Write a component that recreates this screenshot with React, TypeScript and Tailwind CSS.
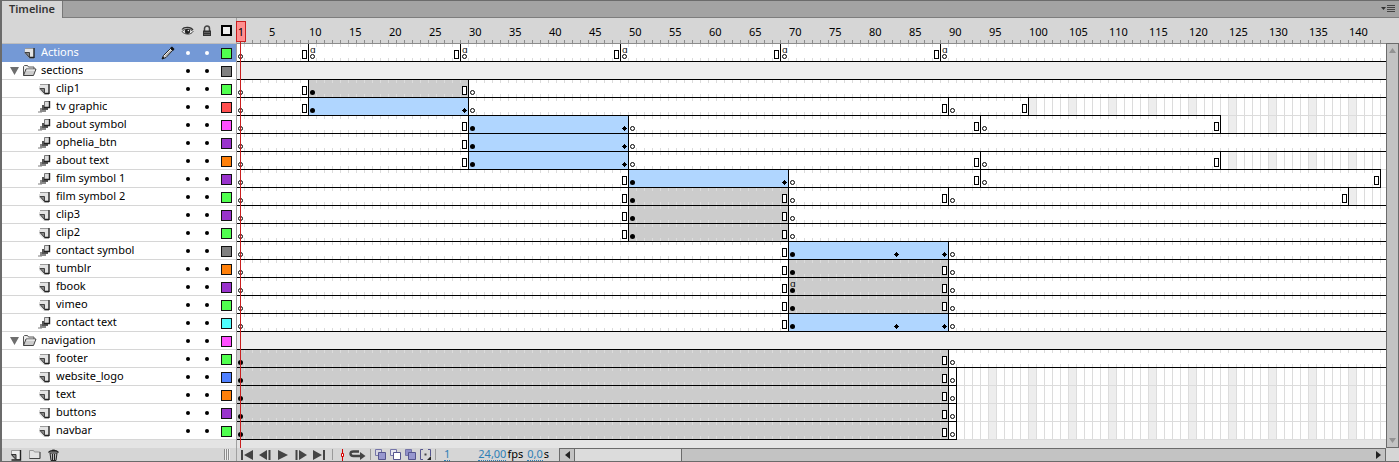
import { useState } from "react";
import clsx from "clsx";

const FRAME = 8;

type Kind = "blank" | "filled" | "tween" | "empty";

interface Span {
  kind: Kind;
  // last frame of the span, left out when it runs to the edge of the view
  to?: number;
  start?: "key" | "blankKey";
  end?: "rect" | "diamond";
  action?: boolean;
  // the span carries on into the next one without a divider
  joined?: boolean;
  darkLine?: boolean;
}

interface Layer {
  name: string;
  icon: "layer" | "tween" | "folder";
  color: string;
  spans: Span[];
}

const blank = (to?: number, more: Partial<Span> = {}): Span => ({
  kind: "blank",
  to,
  start: "blankKey",
  end: to ? "rect" : undefined,
  ...more,
});
const filled = (to: number, more: Partial<Span> = {}): Span => ({
  kind: "filled",
  to,
  start: "key",
  end: "rect",
  ...more,
});
const tween = (to: number, more: Partial<Span> = {}): Span => ({
  kind: "tween",
  to,
  start: "key",
  end: "diamond",
  ...more,
});
const empty = (to?: number, darkLine = false): Span => ({ kind: "empty", to, darkLine });

const green = "bg-[#50ff4f]";
const gray = "bg-[#808080]";
const red = "bg-[#ff4f4f]";
const pink = "bg-[#ff4fff]";
const purple = "bg-[#9933cc]";
const orange = "bg-[#ff800a]";
const cyan = "bg-[#4fffff]";
const blue = "bg-[#4f80ff]";

const layers: Layer[] = [
  {
    name: "Actions",
    icon: "layer",
    color: green,
    spans: [
      blank(9),
      blank(28, { action: true }),
      blank(48, { action: true }),
      blank(68, { action: true }),
      blank(88, { action: true }),
      blank(undefined, { action: true }),
    ],
  },
  { name: "sections", icon: "folder", color: gray, spans: [] },
  { name: "clip1", icon: "layer", color: green, spans: [blank(9), filled(29), blank()] },
  {
    name: "tv graphic",
    icon: "tween",
    color: red,
    spans: [blank(9), tween(29), blank(89), blank(99), empty(123, true), empty()],
  },
  {
    name: "about symbol",
    icon: "tween",
    color: pink,
    spans: [blank(29), tween(49), blank(93), blank(123), empty(undefined, true)],
  },
  { name: "ophelia_btn", icon: "tween", color: purple, spans: [blank(29), tween(49), blank()] },
  {
    name: "about text",
    icon: "tween",
    color: orange,
    spans: [blank(29), tween(49), blank(93), blank(123), empty(143, true), empty()],
  },
  {
    name: "film symbol 1",
    icon: "tween",
    color: purple,
    spans: [blank(49), tween(69), blank(93), blank(143), empty()],
  },
  {
    name: "film symbol 2",
    icon: "layer",
    color: green,
    spans: [blank(49), filled(69), blank(89), blank(139), empty(undefined, true)],
  },
  { name: "clip3", icon: "layer", color: purple, spans: [blank(49), filled(69), blank()] },
  { name: "clip2", icon: "layer", color: green, spans: [blank(49), filled(69), blank()] },
  {
    name: "contact symbol",
    icon: "tween",
    color: gray,
    spans: [blank(69), tween(83, { joined: true }), tween(89, { start: undefined }), blank()],
  },
  { name: "tumblr", icon: "layer", color: orange, spans: [blank(69), filled(89), blank()] },
  {
    name: "fbook",
    icon: "layer",
    color: purple,
    spans: [blank(69), filled(89, { action: true }), blank()],
  },
  { name: "vimeo", icon: "layer", color: green, spans: [blank(69), filled(89), blank()] },
  {
    name: "contact text",
    icon: "tween",
    color: cyan,
    spans: [blank(69), tween(83, { joined: true }), tween(89, { start: undefined }), blank()],
  },
  { name: "navigation", icon: "folder", color: pink, spans: [] },
  { name: "footer", icon: "layer", color: green, spans: [filled(89), blank()] },
  ...[
    ["website_logo", blue],
    ["text", orange],
    ["buttons", purple],
    ["navbar", green],
  ].map(([name, color]): Layer => ({
    name,
    icon: "layer",
    color,
    spans: [filled(89), blank(90, { end: undefined }), empty()],
  })),
];

function LayerIcon() {
  return (
    <svg width="12" height="12" viewBox="0 0 12 12" aria-hidden="true">
      <path d="M0 3h10v9H5L0 7z" fill="#999" opacity=".35" />
      <path d="M1 1h9v9.500H6L1 5.500z" fill="#e4e4e4" />
      <path d="M1 1.500h8.500" stroke="#999" />
      <path d="M10 1v10M5.500 10.500H10" stroke="#222" strokeWidth="1.400" />
      <path d="M1 5.500h4.500v5z" fill="#888" stroke="#333" strokeWidth=".9" />
    </svg>
  );
}

function TweenIcon() {
  return (
    <svg width="14" height="14" viewBox="0 0 14 14" aria-hidden="true">
      <path d="M0 11h4v2H0z" fill="#bdbdbd" />
      <path d="M2 8h6v4H2z" fill="#8a8a8a" />
      <path d="M4 5h6v5H4z" fill="#555" />
      <path d="M6.500 1.500h5v6h-5z" fill="#dcdcdc" stroke="#777" />
      <path d="M11.500 1v6.500H6" fill="none" stroke="#222" strokeWidth="1.400" />
    </svg>
  );
}

function FolderIcon() {
  return (
    <svg width="15" height="13" viewBox="0 0 15 13" aria-hidden="true">
      <path d="M1.500 11.500v-9l1-1h3l1 1.500h5.500v2" fill="#eee" stroke="#555" />
      <path d="M1.500 11.500 4 5h10l-2.500 6.500z" fill="#ccc" stroke="#444" />
      <path d="M4.500 6h8.500" stroke="#fff" />
    </svg>
  );
}

function LayerRow({
  layer,
  selected,
  onSelect,
}: {
  layer: Layer;
  selected: boolean;
  onSelect: () => void;
}) {
  const folder = layer.icon === "folder";
  const nested = !folder && layer.name !== "Actions";
  const dot = clsx("size-1 rounded-full", selected ? "bg-white" : "bg-black");

  return (
    <li
      className={clsx(
        "flex h-[18px] items-center border-b pr-1",
        selected ? "border-[#7499d6] bg-[#7499d6] text-white" : "border-[#d6d6d6] bg-white",
      )}
    >
      <button
        onClick={onSelect}
        className={clsx(
          "flex h-full min-w-0 flex-1 items-center text-left",
          folder ? "gap-[3px] pl-2" : nested ? "gap-1 pl-9" : "gap-1 pl-[21px]",
        )}
      >
        {folder && (
          <svg width="9" height="8" viewBox="0 0 9 8" aria-hidden="true">
            <path d="M0 0h9L4.500 8z" fill="#6e6e6e" />
          </svg>
        )}
        <span className={clsx("flex items-center", folder ? "w-4" : "h-4 w-3.5 justify-center")}>
          {layer.icon === "layer" && <LayerIcon />}
          {layer.icon === "tween" && <TweenIcon />}
          {folder && <FolderIcon />}
        </span>
        <span className="truncate pb-0.5 leading-4">{layer.name}</span>
      </button>
      {selected && (
        <svg className="mr-[3px]" width="14" height="14" viewBox="0 0 14 14" aria-hidden="true">
          <path d="M1 13 2.500 9.500 9.500 2.500l2 2L5 11.500z" fill="#eee" stroke="#222" />
          <path d="m4 10.500 6-6" stroke="#777" />
          <path d="M9 2 11 .5 13.500 3l-1.500 2zM1 13l1-2.500L3.500 12z" fill="#111" />
        </svg>
      )}
      <button aria-label={`Hide ${layer.name}`} className="flex w-[19px] justify-center py-1">
        <span className={dot} />
      </button>
      <button aria-label={`Lock ${layer.name}`} className="flex w-[19px] justify-center py-1">
        <span className={dot} />
      </button>
      <button
        aria-label={`Outline ${layer.name}`}
        className={clsx("mt-px ml-[5px] size-[11px] border border-[#111]", layer.color)}
      />
    </li>
  );
}

const kindClass: Record<Kind, string> = {
  blank:
    "bg-white [background-image:linear-gradient(90deg,transparent_7px,#dcdcdc_7px),linear-gradient(90deg,transparent_7px,#dcdcdc_7px)] [background-position:left_top,left_bottom] [background-size:8px_3px] bg-repeat-x",
  filled:
    "bg-[#cccccc] [background-image:linear-gradient(90deg,transparent_7px,#dcdcdc_7px),linear-gradient(90deg,transparent_7px,#dcdcdc_7px)] [background-position:left_top,left_bottom] [background-size:8px_3px] bg-repeat-x",
  tween: "bg-[#b0d6ff]",
  empty:
    "bg-white [background-image:linear-gradient(90deg,transparent_7px,#dcdcdc_7px),linear-gradient(90deg,transparent_32px,#ededed_32px)] [background-size:8px_100%,40px_100%]",
};

function FrameSpan({ span, from }: { span: Span; from: number }) {
  const style: React.CSSProperties = {};
  if (span.to) style.width = (span.to - from + 1) * FRAME;

  // only the grid shows past the last frame
  if (span.kind === "empty") {
    style.backgroundPosition = `0 0, ${-((from - 1) % 5) * FRAME}px 0`;
    return (
      <div
        style={style}
        className={clsx(
          "border-b",
          span.to ? "shrink-0" : "flex-1",
          span.darkLine ? "border-black" : "border-[#dcdcdc]",
          kindClass.empty,
        )}
      />
    );
  }

  return (
    <div
      style={style}
      className={clsx(
        "flex items-end justify-between border-b border-black px-px pb-0.5",
        span.to ? "shrink-0" : "flex-1",
        span.to && !span.joined && "border-r",
        span.joined && "pr-0.5",
        kindClass[span.kind],
      )}
    >
      <span className="flex w-[5px] flex-col">
        {span.action && (
          <span className="h-2 font-['DejaVu_Sans',sans-serif] text-[9px] leading-2">ɑ</span>
        )}
        {span.start === "key" && <span className="size-[5px] rounded-full bg-black" />}
        {span.start === "blankKey" && (
          <span className="size-[5px] rounded-full border border-black bg-white" />
        )}
      </span>
      {span.end === "rect" && <span className="h-[9px] w-[5px] border border-black bg-white" />}
      {span.end === "diamond" && (
        <svg width="5" height="5" viewBox="0 0 5 5" aria-hidden="true">
          <path d="M2 0h1v1h1v1h1v1H4v1H3v1H2V4H1V3H0V2h1V1h1z" />
        </svg>
      )}
    </div>
  );
}

function FrameRow({ layer }: { layer: Layer }) {
  if (layer.icon === "folder") {
    return <div className="h-[18px] border-b border-black bg-[#eeeeee]" />;
  }
  let next = 1;
  return (
    <div className="flex h-[18px] overflow-hidden">
      {layer.spans.map((span) => {
        const from = next;
        next = (span.to ?? from) + 1;
        return <FrameSpan key={from} span={span} from={from} />;
      })}
    </div>
  );
}

function Ruler() {
  const marks = Array.from({ length: 28 }, (_, i) => (i + 1) * 5);
  return (
    <div className="flex h-[26px] items-center overflow-hidden border-b border-[#8c8c8c] bg-[#d6d6d6] [background-image:linear-gradient(90deg,transparent_7px,#8c8c8c_7px)] [background-position:left_bottom] [background-size:8px_3px] bg-repeat-x pt-0.5">
      <span className="w-8 shrink-0" />
      {marks.map((n) => (
        <span key={n} className="w-10 shrink-0 leading-4">
          {n}
        </span>
      ))}
    </div>
  );
}

function Playback({ label, d }: { label: string; d: string }) {
  return (
    <button aria-label={label} className="flex w-[18px] justify-center">
      <svg width="12" height="10" viewBox="0 0 12 10" aria-hidden="true">
        <path d={d} fill="#444" />
      </svg>
    </button>
  );
}

function Onion({ label, back, front }: { label: string; back: string; front: string }) {
  return (
    <button aria-label={label} className="flex w-[15px] justify-center">
      <svg width="11" height="11" viewBox="0 0 11 11" aria-hidden="true">
        <path d="M.5.5h6v6h-6z" fill={back} stroke="#7474a8" />
        <path d="M3.500 3.500h7v7h-7z" fill={front} stroke="#55558e" />
      </svg>
    </button>
  );
}

const Divider = () => <span className="h-[11px] w-px bg-[#9a9a9a]" />;

const value = "h-[13px] border-b border-dotted border-[#2f7fb5] leading-3 text-[#2f7fb5]";

export default function App() {
  const [selected, setSelected] = useState("Actions");

  return (
    <div className="w-full border-t border-b border-l-2 border-[#6b6b6b] bg-[#d6d6d6] font-['Noto_Sans',sans-serif] text-[11px] text-black">
      <div className="flex h-[17px] items-stretch justify-between bg-[#a3a3a3]">
        <button className="border-r border-[#777] bg-[#d6d6d6] px-[7px] pb-0.5 leading-[15px] font-semibold text-[#333]">
          Timeline
        </button>
        <div className="flex flex-1 items-center justify-end border-b border-[#7d7d7d] pr-1">
          <button aria-label="Panel menu">
            <svg width="14" height="8" viewBox="0 0 14 8" aria-hidden="true">
              <path d="M0 2h5L2.500 5z" fill="#333" />
              <path d="M6 .5h8M6 2.500h8M6 4.500h8M6 6.500h8" stroke="#444" />
            </svg>
          </button>
        </div>
      </div>

      <div className="flex">
        <div className="w-[235px] shrink-0 border-r border-[#a0a0a0]">
          <div className="flex h-[26px] items-center justify-end border-b border-[#bdbdbd] pr-1">
            <button aria-label="Show or hide all layers" className="flex w-[19px] justify-center">
              <svg width="13" height="10" viewBox="0 0 13 10" aria-hidden="true">
                <path d="M1 3.500C3 .5 10 .5 12 4" fill="none" stroke="#333" strokeWidth="1.300" />
                <path d="M1 5.500C3 2.500 10 2.500 12 5.500 10 9 4 9 1 5.500z" fill="#eee" stroke="#444" />
                <circle cx="6.500" cy="5.300" r="2.600" fill="#222" />
                <circle cx="7.300" cy="4.500" r=".7" fill="#fff" />
              </svg>
            </button>
            <button aria-label="Lock or unlock all layers" className="flex w-[19px] justify-center">
              <svg width="10" height="12" viewBox="0 0 10 12" aria-hidden="true">
                <path d="M2.500 6V3.500a2.500 2.500 0 0 1 5 0V6" fill="none" stroke="#444" strokeWidth="1.500" />
                <path d="M1 5.500h8V11H1z" fill="#333" />
                <path d="M2 7.500h6M2 9.500h6" stroke="#777" strokeWidth=".7" />
              </svg>
            </button>
            <button
              aria-label="Show all layers as outlines"
              className="ml-[5px] size-[11px] border-2 border-black bg-[#eee]"
            />
          </div>
          <ul>
            {layers.map((layer) => (
              <LayerRow
                key={layer.name}
                layer={layer}
                selected={layer.name === selected}
                onSelect={() => setSelected(layer.name)}
              />
            ))}
          </ul>
          <div className="h-2 bg-[#e4e4e4]" />
        </div>

        <div className="relative min-w-0 flex-1">
          <Ruler />
          {layers.map((layer) => (
            <FrameRow key={layer.name} layer={layer} />
          ))}
          <div className="h-2 bg-[#e4e4e4]" />
          <div className="absolute top-[3px] bottom-0 -left-px flex w-[10px] flex-col">
            <span className="h-[21px] shrink-0 border border-[#c81e1e] bg-[#ff8f8f] text-center leading-5">
              1
            </span>
            <span className="ml-1 w-px flex-1 bg-[#c81e1e]" />
          </div>
        </div>

        <div className="flex w-[13px] shrink-0 flex-col pt-[25px]">
          <div className="flex flex-1 flex-col items-center justify-between border border-[#6b6b6b] bg-[#c3c3c3] py-1">
            <button aria-label="Scroll up">
              <svg width="7" height="5" viewBox="0 0 7 5" aria-hidden="true">
                <path d="M0 5h7L3.500 0z" fill="#929292" />
              </svg>
            </button>
            <button aria-label="Scroll down">
              <svg width="7" height="5" viewBox="0 0 7 5" aria-hidden="true">
                <path d="M0 0h7L3.500 5z" fill="#929292" />
              </svg>
            </button>
          </div>
        </div>
      </div>

      <div className="flex h-[13px] items-center">
        <div className="flex h-full w-[235px] shrink-0 items-center border-r border-[#a0a0a0] pr-1.5 pl-2">
          <button aria-label="New layer" className="w-[19px]">
            <svg width="12" height="12" viewBox="0 0 12 12" aria-hidden="true">
              <path d="M1.500 1.500h9v9H6l-4.500-4z" fill="#eee" stroke="#999" />
              <path d="M10.500 1v10H1.500" fill="none" stroke="#222" strokeWidth="1.400" />
              <path d="M1.500 5.500h4.500v5z" fill="#888" stroke="#333" />
            </svg>
          </button>
          <button aria-label="New folder" className="w-[19px]">
            <svg width="12" height="11" viewBox="0 0 12 11" aria-hidden="true">
              <path d="M.5 9.500v-8h4l1 1.500h5.500v6.500z" fill="#e2e2e2" stroke="#999" />
              <path d="M11 3v6.500H.5" fill="none" stroke="#444" />
            </svg>
          </button>
          <button aria-label="Delete layer">
            <svg width="11" height="12" viewBox="0 0 11 12" aria-hidden="true">
              <path d="m2 4 1 7.500h5L9 4z" fill="#bbb" stroke="#222" />
              <path d="M4.500 5v6M6.500 5v6" stroke="#222" />
              <path d="M.5 3.500C2 1 8 .5 10.500 3.500" fill="#666" stroke="#222" strokeWidth="1.300" />
              <path d="M4 1.500h3" stroke="#222" strokeWidth="1.500" />
            </svg>
          </button>
          <svg className="ml-auto" width="6" height="11" viewBox="0 0 6 11" aria-hidden="true">
            <path d="M.5 0v11M2.500 0v11M4.500 0v11" stroke="#8c8c8c" />
            <path d="M1.500 0v11M3.500 0v11M5.500 0v11" stroke="#eee" />
          </svg>
        </div>

        <div className="flex w-[322px] shrink-0 items-center pl-px">
          <Playback label="Go to first frame" d="M0 0h2v10H0zM12 0v10L3 5z" />
          <Playback label="Step back one frame" d="M8 0v10L0 5zM9.500 0h2v10h-2z" />
          <Playback label="Play" d="M1 0v10l10-5z" />
          <Playback label="Step forward one frame" d="M.5 0h2v10h-2zM4 0v10l8-5z" />
          <Playback label="Go to last frame" d="M0 0v10l9-5zM10 0h2v10h-2z" />
          <span className="w-1" />
          <Divider />
          <button aria-label="Center frame" className="ml-1.5 flex w-[6px] justify-center">
            <svg width="5" height="12" viewBox="0 0 5 12" aria-hidden="true">
              <path d="M2.500 0v4M2.500 8v4" stroke="#d40000" />
              <path d="M1.500 4.500h2v3h-2z" fill="#fff" stroke="#d40000" />
            </svg>
          </button>
          <button aria-label="Loop" className="mx-1">
            <svg width="17" height="10" viewBox="0 0 17 10" aria-hidden="true">
              <path d="M10 1.500H4.500C.5 1.500.5 6 4.500 6H11" fill="none" stroke="#444" strokeWidth="2.400" />
              <path d="M11 2v8l5.500-4z" fill="#444" />
            </svg>
          </button>
          <Divider />
          <span className="w-0.5" />
          <Onion label="Onion skin" back="#d6d6e2" front="#9797cf" />
          <Onion label="Onion skin outlines" back="#e6e6ee" front="#ffffff" />
          <Onion label="Edit multiple frames" back="#8f8fc8" front="#9797cf" />
          <button aria-label="Modify markers" className="flex w-[15px] justify-center">
            <svg width="11" height="11" viewBox="0 0 11 11" aria-hidden="true">
              <path d="M3 .5H.5v10H3M8 .5h2.500V7" fill="none" stroke="#55558e" />
              <path d="M4.500 4.500h2v2h-2z" fill="#444" />
              <path d="M11 7v4H7z" fill="#222" />
            </svg>
          </button>
          <span className="w-0.5" />
          <Divider />
          <button aria-label="Current frame" className={clsx(value, "ml-2")}>
            1
          </button>
          <span className="ml-7 flex gap-px leading-3">
            <button aria-label="Frame rate" className={value}>
              24,00
            </button>
            fps
          </span>
          <span className="ml-1 flex gap-px leading-3">
            <button aria-label="Elapsed time" className={value}>
              0,0
            </button>
            s
          </span>
        </div>

        <div className="mr-[13px] flex h-full min-w-0 flex-1 items-stretch border border-b-0 border-[#6b6b6b] bg-[#c3c3c3]">
          <button aria-label="Scroll left" className="flex w-[14px] items-center justify-center">
            <svg width="5" height="8" viewBox="0 0 5 8" aria-hidden="true">
              <path d="M5 0v8L0 4z" fill="#222" />
            </svg>
          </button>
          <span className="w-[108px] border-x border-[#6b6b6b] bg-[#dcdcdc]" />
          <button aria-label="Scroll right" className="ml-auto flex w-[13px] items-center justify-center">
            <svg width="5" height="8" viewBox="0 0 5 8" aria-hidden="true">
              <path d="M0 0v8l5-4z" fill="#222" />
            </svg>
          </button>
        </div>
      </div>
    </div>
  );
}
